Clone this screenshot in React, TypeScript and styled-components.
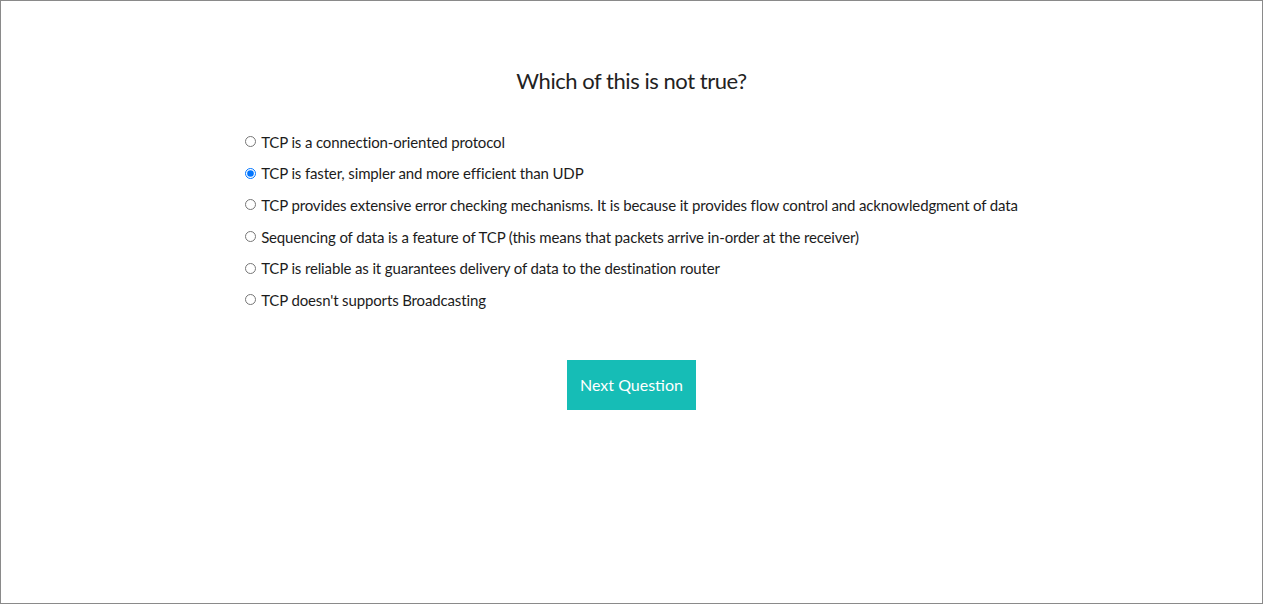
import React from "react";
import styled, { createGlobalStyle } from "styled-components";

const Global = createGlobalStyle`
  html, body { margin: 0; padding: 0; background: #fff; }
  * { box-sizing: border-box; }
`;

const Frame = styled.div`
  width: 1263px;
  height: 604px;
  border: 1px solid #8a8a8a;
  display: flex;
  flex-direction: column;
  align-items: center;
  font-family: "Lato", "Liberation Sans", sans-serif;
  color: #222;
  padding-top: 64px;
`;

const Title = styled.h1`
  margin: 0;
  font-weight: 400;
  font-size: 22px;
  line-height: 32px;
  color: #222;
  letter-spacing: -0.45px;
`;

const List = styled.div`
  margin-top: 29px;
  display: flex;
  flex-direction: column;
  align-items: flex-start;
`;

const Option = styled.label`
  display: flex;
  align-items: center;
  height: 31.6px;
  font-size: 15px;
  letter-spacing: -0.14px;
  color: #1c1c1c;
`;

const Radio = styled.input`
  margin: 0 5px 0 0;
  width: 11px;
  height: 11px;
`;

const Button = styled.button`
  margin-top: 44px;
  width: 129px;
  height: 50px;
  border: none;
  background: #16bdb6;
  color: #fff;
  font-family: inherit;
  font-size: 16px;
  cursor: pointer;
`;

const options = [
  "TCP is a connection-oriented protocol",
  "TCP is faster, simpler and more efficient than UDP",
  "TCP provides extensive error checking mechanisms. It is because it provides flow control and acknowledgment of data",
  "Sequencing of data is a feature of TCP (this means that packets arrive in-order at the receiver)",
  "TCP is reliable as it guarantees delivery of data to the destination router",
  "TCP doesn't supports Broadcasting",
];

export default function App() {
  return (
    <>
      <Global />
      <Frame>
        <Title>Which of this is not true?</Title>
        <List>
          {options.map((o, i) => (
            <Option key={i}>
              <Radio type="radio" name="q" defaultChecked={i === 1} />
              {o}
            </Option>
          ))}
        </List>
        <Button>Next Question</Button>
      </Frame>
    </>
  );
}
